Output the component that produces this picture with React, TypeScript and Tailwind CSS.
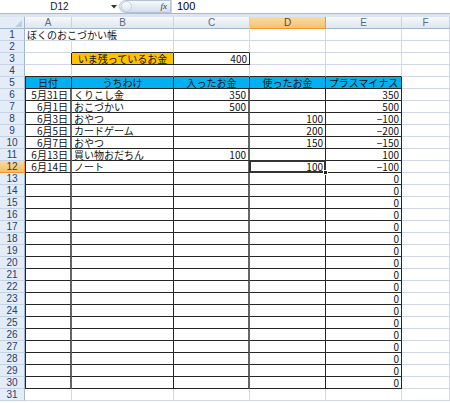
const COL_LETTERS = ["A", "B", "C", "D", "E", "F"];
const COL_W = ["w-[47px]", "w-[102px]", "w-[76px]", "w-[76px]", "w-[76px]", "flex-1"];

const entries = [
  ["5月31日", "くりこし金", "350", "", "350"],
  ["6月1日", "おこづかい", "500", "", "500"],
  ["6月3日", "おやつ", "", "100", "−100"],
  ["6月5日", "カードゲーム", "", "200", "−200"],
  ["6月7日", "おやつ", "", "150", "−150"],
  ["6月13日", "買い物おだちん", "100", "", "100"],
  ["6月14日", "ノート", "", "100", "−100"],
];

const headers = ["日付", "うちわけ", "入ったお金", "使ったお金", "プラスマイナス"];

type CellInfo = { t: string; align: "l" | "c" | "r" };

function cellInfo(r: number, c: number): CellInfo {
  if (r === 1 && c === 0) return { t: "ぼくのおこづかい帳", align: "l" };
  if (r === 3 && c === 1) return { t: "いま残っているお金", align: "c" };
  if (r === 3 && c === 2) return { t: "400", align: "r" };
  if (r === 5 && c < 5) return { t: headers[c], align: "c" };
  if (r >= 6 && r <= 12 && c < 5) return { t: entries[r - 6][c], align: c === 1 ? "l" : "r" };
  if (r >= 13 && r <= 30 && c === 4) return { t: "0", align: "r" };
  return { t: "", align: "l" };
}

function rightBorder(r: number, c: number) {
  const inTable = r >= 5 && r <= 30 && c <= 4;
  if (inTable && r >= 6 && (c === 0 || c === 2)) return "border-r-2 border-r-[#666]";
  if (inTable) return "border-r border-r-[#262626]";
  if (r === 3 && c <= 2) return "border-r border-r-[#262626]";
  if (r === 1 && c === 0) return "border-r border-r-transparent";
  return "border-r border-r-[#d0d7e5]";
}

function bottomBorder(r: number, c: number) {
  if (r >= 4 && r <= 30 && c <= 4) return "border-b border-b-[#262626]";
  if ((r === 2 || r === 3) && (c === 1 || c === 2)) return "border-b border-b-[#262626]";
  return "border-b border-b-[#d0d7e5]";
}

function Cell({ r, c }: { r: number; c: number }) {
  const info = cellInfo(r, c);
  const justify =
    info.align === "c" ? "justify-center" : info.align === "r" ? "justify-end pr-[2px]" : "justify-start pl-[2px]";
  let bg = "";
  if (r === 5 && c <= 4) bg = "bg-[#00b0f0]";
  if (r === 3 && c === 1) bg = "bg-[#ffc000]";
  const leftEdge = r >= 5 && r <= 30 && c === 0 ? "shadow-[inset_1px_0_0_#262626]" : "";
  const selected = r === 12 && c === 3;

  return (
    <div
      className={`${COL_W[c]} h-[12px] flex items-center whitespace-nowrap overflow-visible text-[10px] leading-[10px] text-[#111] ${justify} ${bg} ${leftEdge} ${rightBorder(r, c)} ${bottomBorder(r, c)} ${selected ? "relative" : ""}`}
    >
      {info.t}
      {selected && (
        <>
          <div className="absolute z-10 left-[-1px] top-[-1px] right-[-1px] bottom-[-1px] border-2 border-[#333]" />
          <div className="absolute z-20 right-[-3px] bottom-[-3px] w-[5px] h-[5px] bg-[#222] border border-white" />
        </>
      )}
    </div>
  );
}

function RowHeader({ r }: { r: number }) {
  const sel = r === 12;
  return (
    <div
      className={`w-[25px] h-[12px] flex items-center justify-center text-[10px] leading-[10px] [font-family:'Liberation_Sans',Arial,sans-serif] border-r border-b ${
        sel
          ? "bg-linear-to-b from-[#f9d99f] to-[#f1c15f] border-r-[#f29536] border-b-[#f29536] text-[#1f3a60]"
          : "bg-[#e4ecf7] border-r-[#9eb6ce] border-b-[#c5d3e6] text-[#27416b]"
      }`}
    >
      {r}
    </div>
  );
}

function FormulaBar() {
  return (
    <div className="flex h-[14px] bg-white border-b border-[#a7bad4] [font-family:'Liberation_Sans',Arial,sans-serif]">
      <div className="relative w-[119px] flex items-center justify-center text-[10px] text-[#222]">
        D12
        <svg className="absolute right-[2px] top-[5px]" width="6" height="4" viewBox="0 0 6 4">
          <path d="M0 0H6L3 3.5Z" fill="#333" />
        </svg>
      </div>
      <div className="w-[52px] h-[13px] flex items-center justify-between rounded-l-full bg-linear-to-b from-[#f7f9fc] to-[#d4deeb] border border-[#b4c2d6]">
        <div className="ml-[1px] w-[11px] h-[11px] rounded-full bg-linear-to-b from-white to-[#dbe4ef] border border-[#c2cddb]" />
        <span className="mr-[3px] text-[9px] italic [font-family:'Liberation_Serif',serif] text-[#333]">fx</span>
      </div>
      <div className="flex-1 flex items-center pl-[5px] text-[11px] text-black border-l border-[#c8d3e2]">100</div>
    </div>
  );
}

function ColumnHeaders() {
  return (
    <div className="flex h-[12px] [font-family:'Liberation_Sans',Arial,sans-serif] text-[10px] leading-[10px]">
      <div className="relative w-[25px] h-[12px] bg-[#e4ecf7] border-r border-b border-[#9eb6ce]">
        <svg className="absolute right-[2px] bottom-[1px]" width="7" height="7" viewBox="0 0 7 7">
          <path d="M7 0V7H0Z" fill="#c3ccd8" />
        </svg>
      </div>
      {COL_LETTERS.map((l, i) => (
        <div
          key={l}
          className={`${COL_W[i]} h-[12px] flex items-center justify-center border-r border-b ${
            i === 3
              ? "bg-linear-to-b from-[#f9dba3] to-[#f3c46a] border-r-[#f29536] border-b-[#f29536] text-[#5b4a2a]"
              : "bg-linear-to-b from-[#f6f8fb] to-[#dfe6ef] border-r-[#c5d3e6] border-b-[#9eb6ce] text-[#5a6a82]"
          }`}
        >
          {l}
        </div>
      ))}
    </div>
  );
}

export default function App() {
  const rows = Array.from({ length: 31 }, (_, i) => i + 1);
  return (
    <div className="w-[450px] h-[403px] overflow-hidden bg-white">
      <FormulaBar />
      <div className="h-[3px] bg-[#dbe4f0]" />
      <div className="[font-family:'Noto_Sans_CJK_JP',sans-serif]">
        <ColumnHeaders />
        {rows.map((r) => (
          <div key={r} className="flex">
            <RowHeader r={r} />
            {COL_LETTERS.map((_, c) => (
              <Cell key={c} r={r} c={c} />
            ))}
          </div>
        ))}
      </div>
    </div>
  );
}
